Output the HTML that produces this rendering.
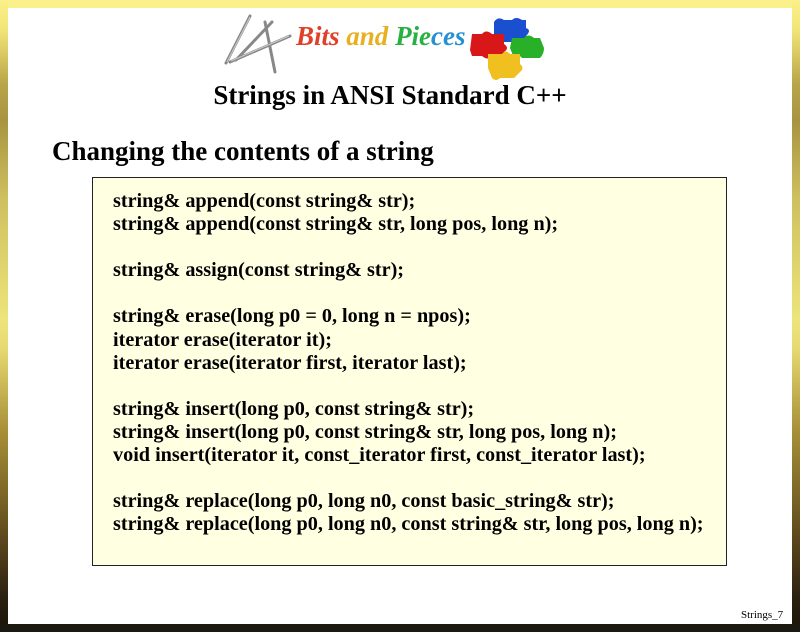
<!DOCTYPE html>
<html><head><meta charset="utf-8"><style>
html,body{margin:0;padding:0;}
body{width:800px;height:632px;position:relative;overflow:hidden;background:#fff;font-family:"Liberation Serif",serif;}
.top{position:absolute;left:0;top:0;width:800px;height:8px;background:#fbf08a;}
.side{position:absolute;top:0;width:8px;height:632px;background:linear-gradient(#fbf08a 0px,#f2e577 30px,#b8a448 85px,#a89440 120px,#cfc060 200px,#ece57a 320px,#e6d870 350px,#a89038 430px,#6a5420 520px,#2a2010 600px,#1a1408 632px);}
.bot{position:absolute;left:0;top:624px;width:800px;height:8px;background:#1c1a10;}
.inner{position:absolute;left:8px;top:8px;width:784px;height:616px;background:#fff;}
.t1{position:absolute;left:0;width:780px;top:80px;text-align:center;font-weight:bold;font-size:27px;}
.t2{position:absolute;left:52px;top:136px;font-weight:bold;font-size:27px;}
.box{position:absolute;left:92px;top:177px;width:635px;height:389px;border:1.5px solid #222;background:#ffffe2;box-sizing:border-box;}
.code{position:absolute;left:113px;top:190px;font-weight:bold;font-size:20.2px;line-height:23.1px;white-space:pre;}
.foot{position:absolute;left:741px;top:609px;font-size:11px;}
</style></head><body>
<div class="top"></div>
<div class="side" style="left:0"></div>
<div class="side" style="left:792px"></div>
<div class="inner"></div>
<div class="bot"></div>
<svg style="position:absolute;left:0;top:0" width="800" height="100">
<g stroke="#888" stroke-width="3" stroke-linecap="round">
<line x1="226" y1="63" x2="250" y2="16"/>
<line x1="236" y1="60" x2="272" y2="22"/>
<line x1="230" y1="62" x2="290" y2="36"/>
<line x1="265" y1="22" x2="275" y2="72"/>
</g>
<g stroke="#ccc" stroke-width="1"><line x1="227" y1="62" x2="250" y2="17"/><line x1="231" y1="61" x2="289" y2="36"/></g>
<text x="296" y="45" font-family="Liberation Serif" font-style="italic" font-weight="bold" font-size="27"><tspan fill="#e0402a">Bits </tspan><tspan fill="#e8b020">and </tspan><tspan fill="#28b040">Pie</tspan><tspan fill="#2890d0">ces</tspan></text>
<path d="M494 22 q4 -6 10 -2 h8 q4 -4 10 0 h4 v8 q6 2 0 8 v6 h-32z" fill="#1a4fd0"/>
<path d="M472 34 h10 q4 -5 10 0 h12 v10 q6 4 0 8 v4 h-12 q-4 5 -10 0 h-10 l-2 -6z" fill="#d81818"/>
<path d="M512 38 h12 q4 -5 10 0 h6 l4 10 q0 6 -4 10 h-18 q-4 -5 -8 0 l-4 -10z" fill="#28b028"/>
<path d="M488 54 h14 q4 -5 8 0 h10 v10 q5 4 0 8 l-6 6 h-14 q-4 4 -8 0 l-4 -10z" fill="#f0c020"/>
</svg>
<div class="t1">Strings in ANSI Standard C++</div>
<div class="t2">Changing the contents of a string</div>
<div class="box"></div>
<div class="code">string&amp; append(const string&amp; str);
string&amp; append(const string&amp; str, long pos, long n);

string&amp; assign(const string&amp; str);

string&amp; erase(long p0 = 0, long n = npos);
iterator erase(iterator it);
iterator erase(iterator first, iterator last);

string&amp; insert(long p0, const string&amp; str);
string&amp; insert(long p0, const string&amp; str, long pos, long n);
void insert(iterator it, const_iterator first, const_iterator last);

string&amp; replace(long p0, long n0, const basic_string&amp; str);
string&amp; replace(long p0, long n0, const string&amp; str, long pos, long n);</div>
<div class="foot">Strings_7</div>
</body></html>
